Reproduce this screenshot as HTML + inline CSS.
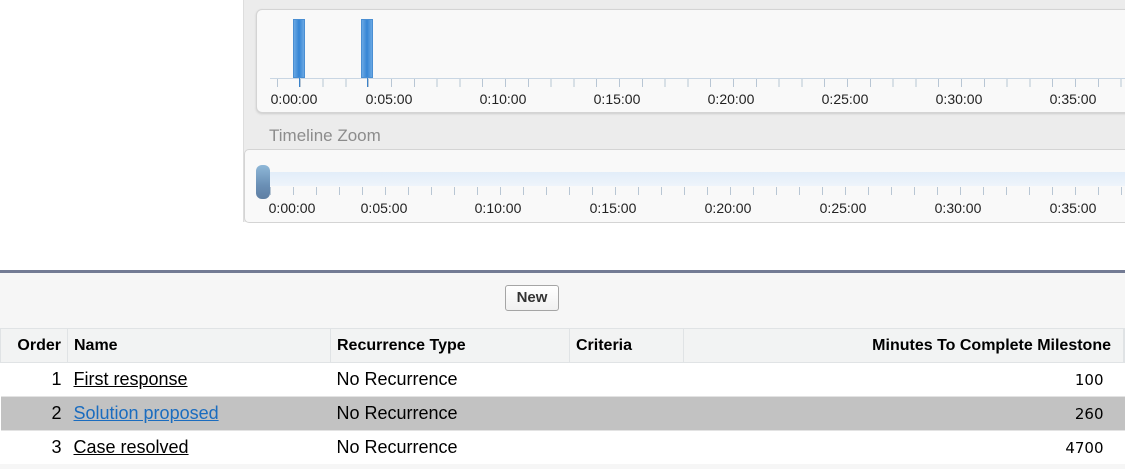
<!DOCTYPE html>
<html><head><meta charset="utf-8"><style>
body{margin:0;width:1125px;height:469px;background:#fff;font-family:"Liberation Sans",Arial,sans-serif;position:relative;overflow:hidden}
.abs{position:absolute}
.outer{left:243px;top:0;width:900px;height:222px;background:#ececec;border-left:1px solid #ddd}
.p1{left:256px;top:9px;width:880px;height:102px;background:#f9f9f9;border:1px solid #d4d4d4;border-radius:6px;box-shadow:0 1px 2px #ccc}
.p2{left:244px;top:149px;width:890px;height:72px;background:#f9f9f9;border:1px solid #d4d4d4;border-radius:5px}
.axis{left:270px;top:78px;width:860px;height:1px;background:#c9d6e3}
.ticks{left:277px;top:79px;width:860px;height:8px;background:repeating-linear-gradient(90deg,#b8c6d4 0 1px,transparent 1px 22.8px)}
.ticks2{left:270px;top:187px;width:860px;height:8px;background:repeating-linear-gradient(90deg,#b8c6d4 0 1px,transparent 1px 23px)}
.lbl{font-size:14px;color:#222;transform:translateX(-50%)}
.bar{width:12px;height:59px;top:19px;background:linear-gradient(90deg,#6aa8e4,#3585d4 50%,#6aa8e4);border:1px solid #4a8fd3;box-sizing:border-box}
table{position:absolute;left:0;top:328px;width:1125px;border-collapse:collapse;font-size:18px;color:#000}
th{background:#f2f3f3;font-size:16px;font-weight:bold;height:33px;border:1px solid #e0e3e5;padding:0 6px;text-align:left}
td{height:33px;padding:0 6px;border-bottom:1px solid #e3e3e3}
a{color:#000;text-decoration:underline}
.num{font-family:"DejaVu Sans",sans-serif;font-size:15px;text-align:right;padding-right:20px}
</style></head><body>
<div class="abs outer"></div>
<div class="abs p1"></div>
<div class="abs axis"></div>
<div class="abs ticks"></div>
<div class="abs bar" style="left:293px"></div>
<div class="abs bar" style="left:361px"></div>
<div class="abs" style="left:299px;top:78px;width:1px;height:9px;background:#3b82c9"></div>
<div class="abs" style="left:367px;top:78px;width:1px;height:9px;background:#3b82c9"></div>
<div class="abs lbl" style="left:294px;top:91px">0:00:00</div>
<div class="abs lbl" style="left:389px;top:91px">0:05:00</div>
<div class="abs lbl" style="left:503px;top:91px">0:10:00</div>
<div class="abs lbl" style="left:617px;top:91px">0:15:00</div>
<div class="abs lbl" style="left:731px;top:91px">0:20:00</div>
<div class="abs lbl" style="left:845px;top:91px">0:25:00</div>
<div class="abs lbl" style="left:959px;top:91px">0:30:00</div>
<div class="abs lbl" style="left:1073px;top:91px">0:35:00</div>
<div class="abs" style="left:269px;top:126px;font-size:17px;color:#8c8c8c">Timeline Zoom</div>
<div class="abs p2"></div>
<div class="abs" style="left:258px;top:172px;width:870px;height:14px;background:linear-gradient(#e2edf9,#eef4fb)"></div>
<div class="abs ticks2"></div>
<div class="abs" style="left:256px;top:165px;width:14px;height:34px;border-radius:6px;background:linear-gradient(#8fb8d8,#6a8fb5 60%,#5f7fa3)"></div>
<div class="abs lbl" style="left:292px;top:200px">0:00:00</div>
<div class="abs lbl" style="left:384px;top:200px">0:05:00</div>
<div class="abs lbl" style="left:498px;top:200px">0:10:00</div>
<div class="abs lbl" style="left:613px;top:200px">0:15:00</div>
<div class="abs lbl" style="left:728px;top:200px">0:20:00</div>
<div class="abs lbl" style="left:843px;top:200px">0:25:00</div>
<div class="abs lbl" style="left:958px;top:200px">0:30:00</div>
<div class="abs lbl" style="left:1073px;top:200px">0:35:00</div>
<div class="abs" style="left:0;top:270px;width:1125px;height:3px;background:#737b94"></div>
<div class="abs" style="left:0;top:273px;width:1125px;height:55px;background:#f6f6f6"></div>
<div class="abs" style="left:505px;top:285px;width:52px;height:24px;border:1px solid #a5a5a5;border-radius:3px;background:linear-gradient(#fff,#f0f0f0);font-size:15px;font-weight:bold;text-align:center;line-height:24px;color:#333">New</div>
<table>
<tr><th style="width:54px;text-align:right">Order</th><th style="width:250px">Name</th><th style="width:226px">Recurrence Type</th><th style="width:101px">Criteria</th><th style="text-align:right;padding-right:12px">Minutes To Complete Milestone</th><th style="width:0;padding:0"></th></tr>
<tr><td style="text-align:right">1</td><td><a>First response</a></td><td>No Recurrence</td><td></td><td class="num">100</td><td style="padding:0"></td></tr>
<tr style="background:#c2c2c2"><td style="text-align:right">2</td><td><a style="color:#1a6cbf">Solution proposed</a></td><td>No Recurrence</td><td></td><td class="num">260</td><td style="padding:0"></td></tr>
<tr><td style="text-align:right">3</td><td><a>Case resolved</a></td><td>No Recurrence</td><td></td><td class="num">4700</td><td style="padding:0"></td></tr>
</table>
<div class="abs" style="left:0;top:464px;width:1125px;height:5px;background:#f6f6f6"></div>
</body></html>
